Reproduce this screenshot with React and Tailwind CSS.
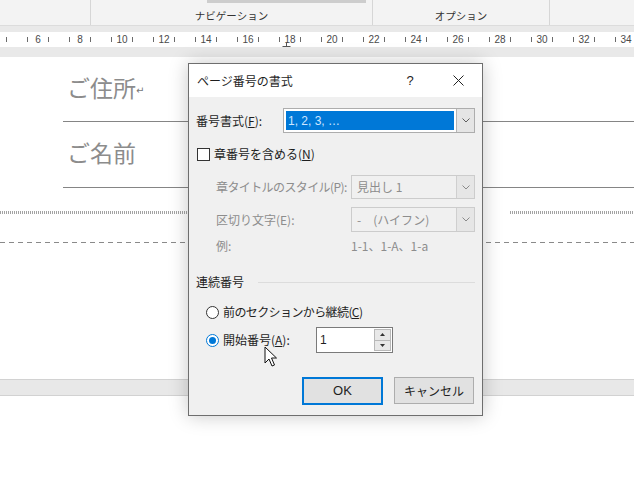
import React from 'react'

const jp = "font-['Noto_Sans_CJK_JP',sans-serif]"
const rulerNums = [4, 6, 8, 10, 12, 14, 16, 18, 20, 22, 24, 26, 28, 30, 32, 34, 36]

const Chevron = ({ color = '#5f5f5f' }) => (
  <svg width="8" height="5" viewBox="0 0 8 5">
    <path d="M0.5 0.5 L4 4 L7.5 0.5" fill="none" stroke={color} strokeWidth="1" />
  </svg>
)

const DropButton = ({ disabled }) => (
  <div className={`w-[18px] flex items-center justify-center border-l ${disabled ? 'border-[#cfcfcf] bg-[#e6e6e6]' : 'border-[#b5b5b5] bg-[#e5e5e5]'}`}>
    <Chevron color={disabled ? '#8a8a8a' : '#5f5f5f'} />
  </div>
)

const Ruler = () => (
  <div className="h-[15px] bg-white flex items-center overflow-hidden">
    <div className="flex ml-[-25px] shrink-0">
      {rulerNums.map((n) => (
        <div key={n} className="w-[42px] shrink-0 px-[10px] flex items-center justify-between">
          <span className="w-px h-[5px] bg-[#6b6b6b]" />
          <span className="text-[10px] leading-none text-[#4a4a4a] font-['Liberation_Sans',sans-serif]">{n === 4 || n === 36 ? '' : n}</span>
          <span className="w-px h-[5px] bg-[#6b6b6b]" />
        </div>
      ))}
    </div>
  </div>
)

const Cursor = () => (
  <svg className="absolute left-[264px] top-[346px]" width="14" height="22" viewBox="0 0 14 22">
    <path d="M1 1 L1 17 L5 13 L8 20 L10.5 19 L7.5 12 L12.5 12 Z" fill="#fff" stroke="#111" strokeWidth="1" strokeLinejoin="round" />
  </svg>
)

export default function App() {
  return (
    <div className={`relative w-[634px] h-[480px] overflow-hidden bg-white flex flex-col ${jp}`}>
      {/* ribbon */}
      <div className="h-[25px] bg-[#f3f3f3] flex shrink-0">
        <div className="w-[91px] border-r border-[#d6d6d6]" />
        <div className="w-[282px] border-r border-[#d6d6d6] flex flex-col">
          <div className="ml-[116px] w-[159px] h-[3px] bg-[#cdcdcd]" />
          <div className="flex-1 flex items-center justify-center text-[10.5px] text-[#333] pt-[4px]">ナビゲーション</div>
        </div>
        <div className="w-[177px] border-r border-[#d6d6d6] flex items-center justify-center text-[10.5px] text-[#333] pt-[7px]">オプション</div>
        <div className="flex-1" />
      </div>

      {/* ruler strip */}
      <div className="bg-[#e9e9e9] border-t border-[#dcdcdc] pt-[6px] pb-[10px] shrink-0">
        <Ruler />
      </div>

      {/* page */}
      <div className="h-[322px] shrink-0 flex flex-col">
        <div className="mt-[19px] ml-[67px] flex items-end h-[23px]">
          <span className="text-[23px] leading-[23px] text-[#8c8c8c]">ご住所</span>
          <span className="text-[10px] leading-none text-[#777] mb-[3px] font-['DejaVu_Sans',sans-serif]">↵</span>
        </div>
        <div className="mt-[22px] ml-[63px] h-px bg-[#858585]" />
        <div className="mt-[19px] ml-[67px] h-[23px]">
          <span className="text-[23px] leading-[23px] text-[#8c8c8c]">ご名前</span>
        </div>
        <div className="mt-[23px] ml-[63px] h-px bg-[#858585]" />
        <div className="mt-[23px] flex h-[3px]">
          <div className="w-[190px] bg-[repeating-linear-gradient(90deg,#a3a3a3_0_1px,transparent_1px_2px)]" />
          <div className="w-[320px]" />
          <div className="flex-1 bg-[repeating-linear-gradient(90deg,#a3a3a3_0_1px,transparent_1px_2px)]" />
        </div>
        <div className="mt-[28px] h-px bg-[repeating-linear-gradient(90deg,#8a8a8a_0_5px,transparent_5px_9px)]" />
      </div>
      <div className="h-[17px] shrink-0 bg-[#e8e8e8] border-y border-[#d2d2d2]" />
      <div className="flex-1 bg-white" />

      {/* dialog */}
      <div className="absolute left-[188px] top-[63px] w-[295px] border border-[#6e6e6e] bg-[#f0f0f0] shadow-[0_0_18px_rgba(0,0,0,0.22)] text-[12px] text-[#1e1e1e] flex flex-col">
        <div className="h-[33px] bg-white flex items-center">
          <span className="pl-[8px] flex-1">ページ番号の書式</span>
          <span className="w-[48px] text-center text-[13px] font-['Liberation_Sans',sans-serif]">?</span>
          <span className="w-[48px] flex justify-center">
            <svg width="11" height="11" viewBox="0 0 11 11">
              <path d="M0.5 0.5 L10.5 10.5 M10.5 0.5 L0.5 10.5" stroke="#222" strokeWidth="1" />
            </svg>
          </span>
        </div>

        <div className="px-[7px] pb-[10px] flex flex-col">
          <div className="mt-[11px] h-[25px] flex items-center">
            <span className="w-[87px]">番号書式(<span className="underline">F</span>):</span>
            <div className="flex-1 h-full flex border border-[#adadad] bg-white">
              <div className="flex-1 p-[2px]">
                <div className="h-full bg-[#0078d7] text-[#cfe6ff] flex items-center pl-[2px] font-['Liberation_Sans',sans-serif] text-[12px]">1, 2, 3, …</div>
              </div>
              <DropButton />
            </div>
          </div>

          <div className="mt-[11px] h-[20px] flex items-center">
            <span className="w-[13px] h-[13px] border border-[#333] bg-white ml-[1px]" />
            <span className="ml-[4px]">章番号を含める(<span className="underline">N</span>)</span>
          </div>

          <div className="mt-[11px] h-[24px] flex items-center pl-[20px] text-[#8d8d8d]">
            <span className="w-[135px] tracking-[-0.6px]">章タイトルのスタイル(P):</span>
            <div className="flex-1 h-full flex border border-[#cccccc] bg-[#f0f0f0]">
              <div className="flex-1 flex items-center pl-[5px]">見出し 1</div>
              <DropButton disabled />
            </div>
          </div>

          <div className="mt-[8px] h-[25px] flex items-center pl-[20px] text-[#8d8d8d]">
            <span className="w-[135px]">区切り文字(E):</span>
            <div className="flex-1 h-full flex border border-[#cccccc] bg-[#f0f0f0]">
              <div className="flex-1 flex items-center pl-[5px]">-　(ハイフン)</div>
              <DropButton disabled />
            </div>
          </div>

          <div className="mt-[4px] h-[20px] flex items-center pl-[20px] text-[#8d8d8d]">
            <span className="w-[135px]">例:</span>
            <span>1-1、1-A、1-a</span>
          </div>

          <div className="mt-[16px] h-[20px] flex items-center">
            <span>連続番号</span>
            <div className="flex-1 ml-[14px] h-px bg-[#dcdcdc]" />
          </div>

          <div className="mt-[10px] h-[20px] flex items-center pl-[10px]">
            <span className="w-[13px] h-[13px] rounded-full border border-[#333] bg-white" />
            <span className="ml-[4px] tracking-[-0.6px]">前のセクションから継続(<span className="underline">C</span>)</span>
          </div>

          <div className="mt-[5px] h-[26px] flex items-center pl-[10px]">
            <span className="w-[13px] h-[13px] rounded-full border border-[#0078d7] bg-white flex items-center justify-center">
              <span className="w-[7px] h-[7px] rounded-full bg-[#0078d7]" />
            </span>
            <span className="ml-[4px] w-[93px]">開始番号(<span className="underline">A</span>):</span>
            <div className="w-[77px] h-full flex border border-[#7a7a7a] bg-white">
              <div className="flex-1 flex items-center pl-[3px] font-['Liberation_Sans',sans-serif]">1</div>
              <div className="w-[17px] flex flex-col m-[1px] border border-[#b8b8b8] bg-[#e8e8e8]">
                <div className="flex-1 flex items-center justify-center border-b border-[#b8b8b8]">
                  <svg width="5" height="3" viewBox="0 0 5 3"><path d="M0 3 L2.5 0 L5 3 Z" fill="#333" /></svg>
                </div>
                <div className="flex-1 flex items-center justify-center">
                  <svg width="5" height="3" viewBox="0 0 5 3"><path d="M0 0 L2.5 3 L5 0 Z" fill="#333" /></svg>
                </div>
              </div>
            </div>
          </div>

          <div className="mt-[24px] flex justify-end gap-[11px] mr-[1px]">
            <div className="w-[81px] h-[28px] border-2 border-[#0078d7] bg-[#e1e1e1] flex items-center justify-center font-['Liberation_Sans',sans-serif] text-[13px]">OK</div>
            <div className="w-[80px] h-[27px] border border-[#adadad] bg-[#e1e1e1] flex items-center justify-center">キャンセル</div>
          </div>
        </div>
      </div>

      {/* indent marker on the ruler */}
      <svg className="absolute left-[282px] top-[42px]" width="9" height="6" viewBox="0 0 9 6">
        <path d="M4.5 0 L4.5 4 M0.5 4.5 L8.5 4.5" stroke="#555" strokeWidth="1" />
      </svg>

      <Cursor />
    </div>
  )
}
